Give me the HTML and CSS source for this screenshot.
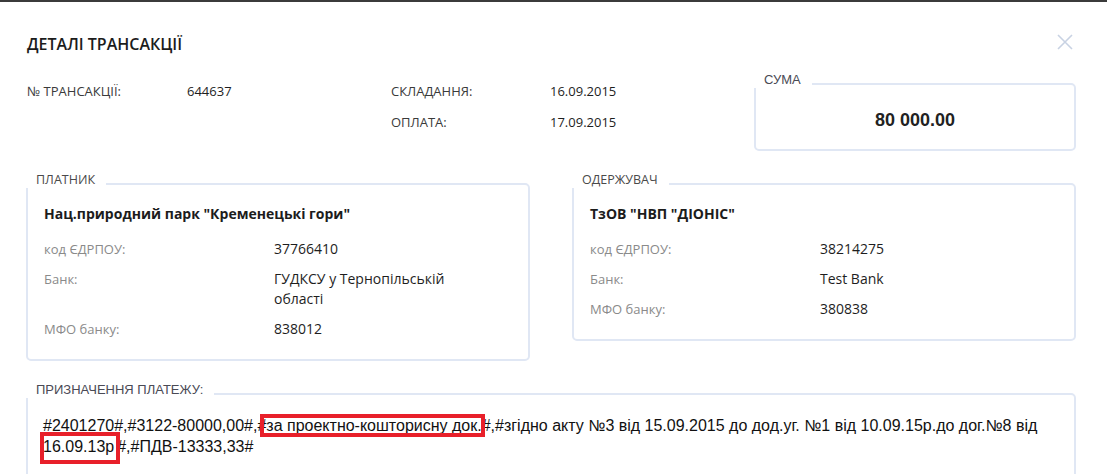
FILE: index.html
```html
<!DOCTYPE html>
<html lang="uk">
  <head>
    <meta charset="UTF-8" />
    <meta name="viewport" content="width=device-width, initial-scale=1.0" />
    <title>Деталі трансакції</title>
    <link rel="stylesheet" href="styles.css">
  </head>
  <body>
    <div class="modal">
      <header class="modal-head">
        <h1 class="modal-title">ДЕТАЛІ ТРАНСАКЦІЇ</h1>
        <button class="close" type="button" aria-label="Закрити">
          <svg width="16" height="16" viewBox="0 0 16 16">
            <path d="M1 1 L15 15 M15 1 L1 15" stroke="#c8d2e3" stroke-width="1.6" fill="none" />
          </svg>
        </button>
      </header>

      <section class="summary">
        <div class="info">
          <span class="info-label">№ ТРАНСАКЦІЇ:</span>
          <span class="info-value">644637</span>
          <span class="info-label">СКЛАДАННЯ:</span>
          <span class="info-value">16.09.2015</span>
          <span></span>
          <span></span>
          <span class="info-label">ОПЛАТА:</span>
          <span class="info-value">17.09.2015</span>
        </div>
        <div class="box sum-box">
          <span class="box-label box-label--plain">СУМА</span>
          <strong class="amount">80 000.00</strong>
        </div>
      </section>

      <section class="parties">
        <div class="box party">
          <span class="box-label">ПЛАТНИК</span>
          <div class="party-name">Нац.природний парк "Кременецькі гори"</div>
          <div class="party-rows">
            <span class="row-label">код ЄДРПОУ:</span>
            <span class="row-value">37766410</span>
            <span class="row-label">Банк:</span>
            <span class="row-value">ГУДКСУ у Тернопільській області</span>
            <span class="row-label">МФО банку:</span>
            <span class="row-value">838012</span>
          </div>
        </div>
        <div class="box party">
          <span class="box-label">ОДЕРЖУВАЧ</span>
          <div class="party-name">ТзОВ "НВП "ДІОНІС"</div>
          <div class="party-rows">
            <span class="row-label">код ЄДРПОУ:</span>
            <span class="row-value">38214275</span>
            <span class="row-label">Банк:</span>
            <span class="row-value">Test Bank</span>
            <span class="row-label">МФО банку:</span>
            <span class="row-value">380838</span>
          </div>
        </div>
      </section>

      <section class="box purpose">
        <span class="box-label box-label--plain">ПРИЗНАЧЕННЯ ПЛАТЕЖУ:</span>
        <p class="purpose-text">#2401270#,#3122-80000,00#,#<span class="mark mark--wide">за проектно-кошторисну док.</span>#,#згідно акту №3 від 15.09.2015 до дод.уг. №1 від 10.09.15р.до дог.№8 від <span class="mark mark--low">16.09.13р</span>#,#ПДВ-13333,33#</p>
      </section>
    </div>
  </body>
</html>
```

FILE: styles.css
```css
html,
body {
  margin: 0;
  background: #fff;
}
body {
  font-family: 'Open Sans', 'Liberation Sans', sans-serif;
  font-size: 13px;
  color: #333;
  overflow: hidden;
}
.modal {
  border-top: 2px solid #3b3b3b;
  padding: 0 31px 0 26px;
}
.modal-head {
  display: flex;
  justify-content: space-between;
  align-items: center;
  padding-top: 31px;
}
.modal-title {
  margin: 0 0 0 1px;
  font-size: 16px;
  font-weight: 600;
  line-height: 22px;
  color: #1c1c1c;
}
.close {
  display: flex;
  padding: 0;
  margin: -4px 3px 0 0;
  border: 0;
  background: none;
}
.summary {
  display: flex;
  align-items: flex-start;
  margin-top: 26px;
}
.info {
  flex: 1;
  display: grid;
  grid-template-columns: 160px 204px 159px 1fr;
  row-gap: 11px;
  line-height: 20px;
  padding-left: 1px;
}
.info-label {
  color: #3a3a3a;
}
.info-value {
  color: #1e1e1e;
}
.box {
  position: relative;
  border: 2px solid #e0e7f4;
  border-radius: 5px;
  background: #fff;
}
.box-label {
  position: absolute;
  top: -13px;
  left: -2px;
  padding: 0 11px 0 10px;
  background: #fff;
  line-height: 16px;
  font-size: 12.5px;
  color: #4a4a4a;
}
.box-label--plain {
  font-family: 'Liberation Sans', Arial, sans-serif;
  font-size: 13px;
  color: #4a4a55;
}
.sum-box {
  width: 322px;
  height: 68px;
  box-sizing: border-box;
  margin-top: 2px;
  display: flex;
  align-items: center;
  justify-content: center;
}
.amount {
  font-family: 'Liberation Sans', Arial, sans-serif;
  font-size: 18px;
  font-weight: bold;
  color: #222;
  margin-top: 6px;
}
.parties {
  display: grid;
  grid-template-columns: 1fr 1fr;
  column-gap: 42px;
  align-items: start;
  margin-top: 32px;
}
.party {
  padding: 19px 16px 20px;
}
.party-name {
  font-size: 14px;
  font-weight: 700;
  line-height: 20px;
  color: #1c1c1c;
}
.party-rows {
  display: grid;
  grid-template-columns: 230px 200px;
  row-gap: 10px;
  margin-top: 15px;
  line-height: 20px;
}
.row-label {
  color: #8a8a8a;
}
.row-value {
  font-size: 14px;
  font-weight: 500;
  color: #1e1e1e;
}
.purpose {
  margin-top: 32px;
  padding: 20px 20px 30px 15px;
}
.purpose-text {
  margin: 0;
  font-family: 'Liberation Sans', Arial, sans-serif;
  font-size: 16px;
  line-height: 21px;
  color: #111;
}
.mark {
  outline: 4px solid #e8202a;
  outline-offset: -1px;
}
.mark--wide {
  margin-left: -3px;
  padding-left: 3px;
}
.mark--low {
  padding: 3px 3px 6px 0;
}
```
